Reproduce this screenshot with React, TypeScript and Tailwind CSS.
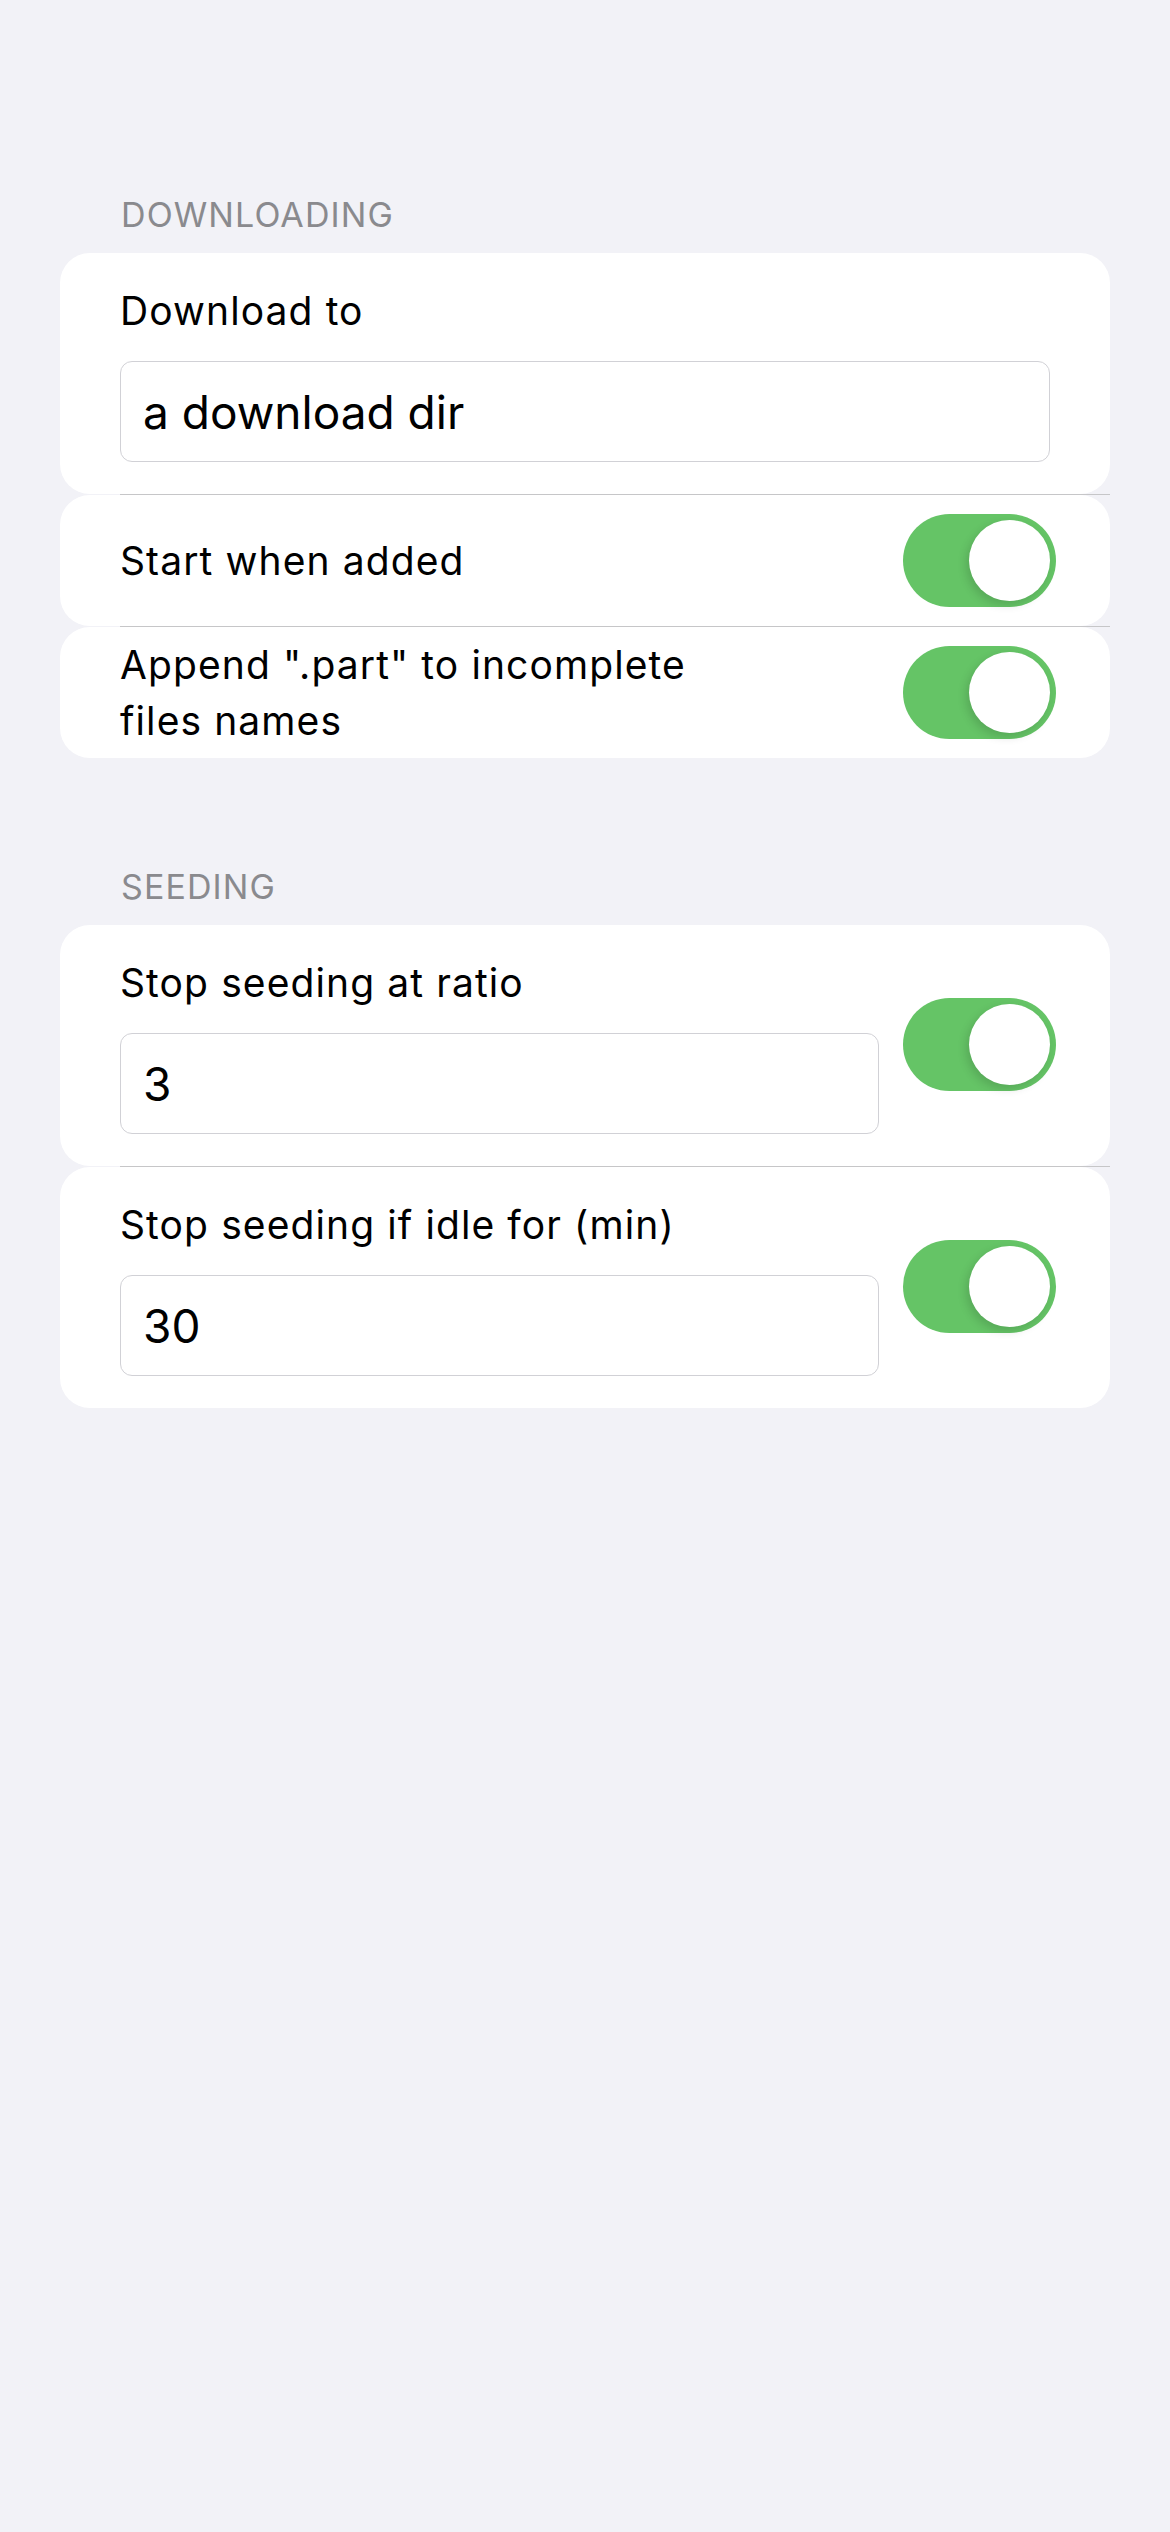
import React from "react";

function Toggle() {
    return (
        <div className="flex h-[93px] w-[153px] shrink-0 justify-end rounded-full bg-[#65c466] p-[6px]">
            <div className="h-[81px] w-[81px] rounded-full bg-white shadow-[-3px_4px_10px_rgba(0,0,0,0.14)]" />
        </div>
    )
}

function Field({ value }: { value: string }) {
    return (
        <input
            type="text"
            defaultValue={value}
            className="mt-[22px] h-[101px] w-full rounded-[12px] border border-[#d1d1d6] bg-white px-[22px] text-[46px] text-black outline-none"
        />
    )
}

function Separator() {
    return <div className="ml-[60px] h-px bg-[#c6c6c8]" />
}

function Header({ title, className }: { title: string; className: string }) {
    return (
        <h2 className={`pl-[61px] text-[34px] leading-[40px] tracking-[1.1px] text-[#8a8a8e] ${className}`}>{title}</h2>
    )
}

export default function App() {
    return (
        <main className="min-h-screen w-full bg-[#f2f2f7] px-[60px] pt-[195px] font-['Inter','Noto_Sans',sans-serif] text-black">
            {/*--Downloading--*/}
            <Header title="DOWNLOADING" className="mb-[18px]" />
            <section className="flex flex-col">
                <div className="rounded-[30px] bg-white pb-[32px] pl-[60px] pr-[60px] pt-[30px]">
                    <p className="text-[39px] leading-[56px] tracking-[1.1px]">Download to</p>
                    <Field value="a download dir" />
                </div>
                <Separator />
                <div className="flex h-[131px] items-center justify-between rounded-[30px] bg-white pl-[60px] pr-[54px]">
                    <p className="text-[39px] leading-[56px] tracking-[1.1px]">Start when added</p>
                    <Toggle />
                </div>
                <Separator />
                <div className="flex h-[131px] items-center justify-between rounded-[30px] bg-white pl-[60px] pr-[54px]">
                    <p className="max-w-[600px] text-[39px] leading-[56px] tracking-[1.1px]">Append ".part" to incomplete files names</p>
                    <Toggle />
                </div>
            </section>

            {/*--Seeding--*/}
            <Header title="SEEDING" className="mb-[18px] mt-[109px]" />
            <section className="flex flex-col">
                <div className="flex items-center gap-[24px] rounded-[30px] bg-white pb-[32px] pl-[60px] pr-[54px] pt-[30px]">
                    <div className="flex min-w-0 flex-1 flex-col">
                        <p className="text-[39px] leading-[56px] tracking-[1.1px]">Stop seeding at ratio</p>
                        <Field value="3" />
                    </div>
                    <Toggle />
                </div>
                <Separator />
                <div className="flex items-center gap-[24px] rounded-[30px] bg-white pb-[32px] pl-[60px] pr-[54px] pt-[30px]">
                    <div className="flex min-w-0 flex-1 flex-col">
                        <p className="text-[39px] leading-[56px] tracking-[1.1px]">Stop seeding if idle for (min)</p>
                        <Field value="30" />
                    </div>
                    <Toggle />
                </div>
            </section>
        </main>
    )
}
